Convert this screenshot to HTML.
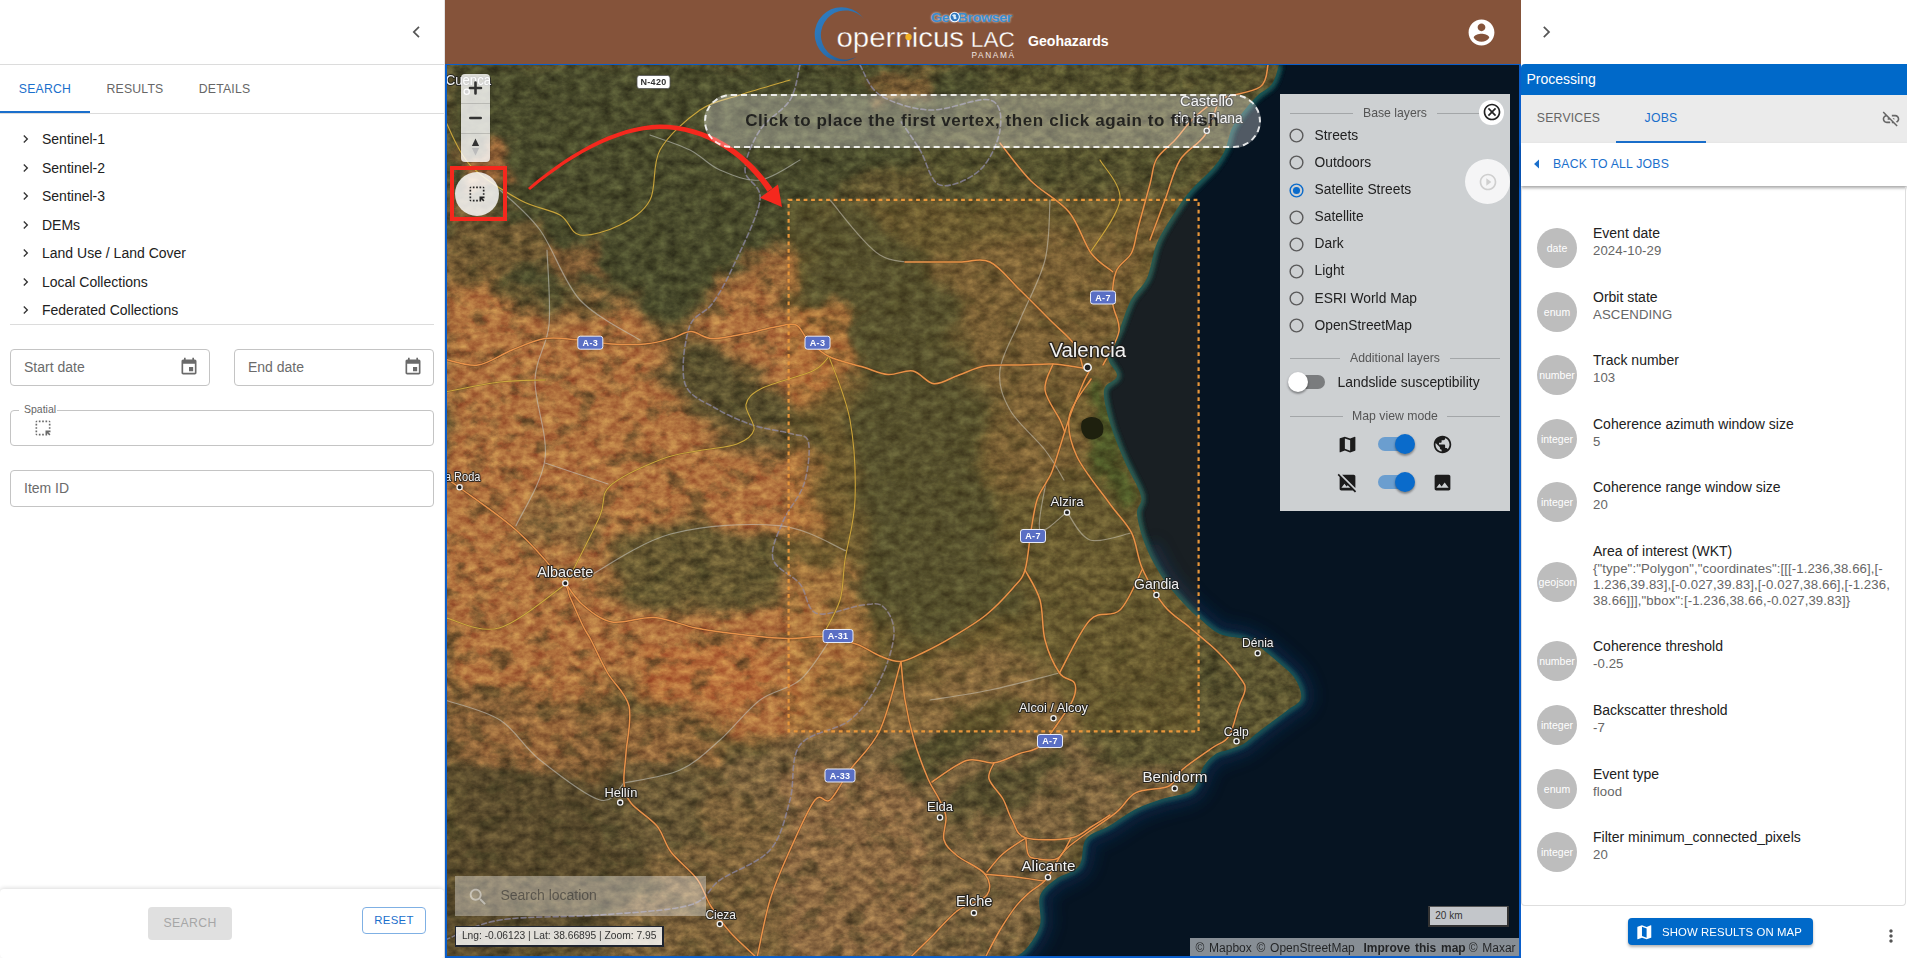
<!DOCTYPE html>
<html lang="en">
<head>
<meta charset="utf-8">
<title>GeoBrowser - Geohazards</title>
<style>
*{box-sizing:border-box;margin:0;padding:0}
html,body{width:1907px;height:958px;overflow:hidden;background:#fff;font-family:"Liberation Sans",sans-serif;color:#212121}
body{position:relative}
.abs{position:absolute}
svg{display:block}
/* ---------- left panel ---------- */
#left{position:absolute;left:0;top:0;width:445px;height:958px;background:#fff;border-right:1px solid #e4e4e4}
#left .hdr{position:absolute;left:0;top:0;width:444px;height:65px;border-bottom:1px solid #dcdcdc}
.tabs{position:absolute;left:0;top:65px;width:444px;height:49px;border-bottom:1px solid #dcdcdc}
.tab{position:absolute;top:0;height:48px;line-height:48px;font-size:12.25px;letter-spacing:.2px;color:#666;text-align:center}
.tab.on{color:#1a6fcc}
.tree{position:absolute;left:0;top:125px;width:444px}
.tree .row{position:absolute;left:0;height:28px;width:444px}
.tree .row span{position:absolute;left:42px;top:0;line-height:28px;font-size:14px;color:#212121}
.tree .row svg{position:absolute;left:18px;top:6px}
.field{position:absolute;border:1px solid #c4c4c4;border-radius:4px;background:#fff}
.field .ph{position:absolute;left:13px;top:0;font-size:14px;color:#6b6b6b}
/* ---------- center ---------- */
#top{position:absolute;left:445px;top:0;width:1076px;height:65px;background:#85533a}
#map{position:absolute;left:445px;top:64px;width:1075.5px;height:894px;border:2px solid #0a5ecb;border-top-width:1px;overflow:hidden;background:#061422}
/* ---------- right panel ---------- */
#right{position:absolute;left:1521px;top:0;width:386px;height:958px;background:#fff}

.av{width:40px;height:40px;border-radius:50%;background:#bdbdbd;color:#fff;font-size:10.5px;line-height:40px;text-align:center}
.it{font-size:14px;line-height:16px;color:#212121;white-space:nowrap}
.iv{font-size:13.2px;letter-spacing:.1px;line-height:16px;color:#666;white-space:nowrap}
</style>
</head>
<body>

<!-- ================= LEFT PANEL ================= -->
<div id="left">
  <div class="hdr">
    <svg class="abs" style="left:405px;top:20px" width="24" height="24" viewBox="0 0 24 24"><path d="M14.6 7.4 13.4 6.2 7.6 12l5.8 5.8 1.2-1.2L10 12z" fill="#555"/></svg>
  </div>
  <div class="tabs">
    <div class="tab on" style="left:0;width:90px">SEARCH</div>
    <div class="tab" style="left:90px;width:90px">RESULTS</div>
    <div class="tab" style="left:180px;width:89px">DETAILS</div>
    <div class="abs" style="left:0;top:46px;width:90px;height:2px;background:#1a6fcc"></div>
  </div>
  <div class="tree">
    <div class="row" style="top:0px"><svg width="16" height="16" viewBox="0 0 24 24"><path d="M9.4 6 8 7.4l4.6 4.6L8 16.6 9.4 18l6-6z" fill="#333"/></svg><span>Sentinel-1</span></div>
    <div class="row" style="top:29px"><svg width="16" height="16" viewBox="0 0 24 24"><path d="M9.4 6 8 7.4l4.6 4.6L8 16.6 9.4 18l6-6z" fill="#333"/></svg><span>Sentinel-2</span></div>
    <div class="row" style="top:57px"><svg width="16" height="16" viewBox="0 0 24 24"><path d="M9.4 6 8 7.4l4.6 4.6L8 16.6 9.4 18l6-6z" fill="#333"/></svg><span>Sentinel-3</span></div>
    <div class="row" style="top:86px"><svg width="16" height="16" viewBox="0 0 24 24"><path d="M9.4 6 8 7.4l4.6 4.6L8 16.6 9.4 18l6-6z" fill="#333"/></svg><span>DEMs</span></div>
    <div class="row" style="top:114px"><svg width="16" height="16" viewBox="0 0 24 24"><path d="M9.4 6 8 7.4l4.6 4.6L8 16.6 9.4 18l6-6z" fill="#333"/></svg><span>Land Use / Land Cover</span></div>
    <div class="row" style="top:143px"><svg width="16" height="16" viewBox="0 0 24 24"><path d="M9.4 6 8 7.4l4.6 4.6L8 16.6 9.4 18l6-6z" fill="#333"/></svg><span>Local Collections</span></div>
    <div class="row" style="top:171px"><svg width="16" height="16" viewBox="0 0 24 24"><path d="M9.4 6 8 7.4l4.6 4.6L8 16.6 9.4 18l6-6z" fill="#333"/></svg><span>Federated Collections</span></div>
  </div>
  <div class="abs" style="left:10px;top:324px;width:424px;height:1px;background:#dcdcdc"></div>
  <div class="field" style="left:10px;top:349px;width:200px;height:37px"><div class="ph" style="line-height:35px">Start date</div><svg class="abs" style="right:10px;top:7px" width="20" height="20" viewBox="0 0 24 24"><path d="M17 12h-5v5h5v-5zM16 1v2H8V1H6v2H5c-1.11 0-1.99.9-1.99 2L3 19c0 1.1.89 2 2 2h14c1.1 0 2-.9 2-2V5c0-1.1-.9-2-2-2h-1V1h-2zm3 18H5V8h14v11z" fill="#6a6a6a"/></svg></div>
  <div class="field" style="left:234px;top:349px;width:200px;height:37px"><div class="ph" style="line-height:35px">End date</div><svg class="abs" style="right:10px;top:7px" width="20" height="20" viewBox="0 0 24 24"><path d="M17 12h-5v5h5v-5zM16 1v2H8V1H6v2H5c-1.11 0-1.99.9-1.99 2L3 19c0 1.1.89 2 2 2h14c1.1 0 2-.9 2-2V5c0-1.1-.9-2-2-2h-1V1h-2zm3 18H5V8h14v11z" fill="#6a6a6a"/></svg></div>
  <div class="field" style="left:10px;top:410px;width:424px;height:36px">
    <div class="abs" style="left:8px;top:-8px;padding:0 1px 0 5px;background:#fff;font-size:10.5px;line-height:12px;color:#666">Spatial</div>
    <svg class="abs" style="left:22px;top:7px" width="20" height="20" viewBox="0 0 24 24" fill="#6a6a6a"><path d="M17 5h-2V3h2v2zm-2 16h2v-2.59L19.59 21 21 19.59 18.41 17H21v-2h-6v6zm4-12h2V7h-2v2zm0 4h2v-2h-2v2zm-8 8h2v-2h-2v2zM7 5h2V3H7v2zM3 17h2v-2H3v2zm2 4v-2H3c0 1.1.9 2 2 2zM19 3v2h2c0-1.1-.9-2-2-2zm-8 2h2V3h-2v2zM3 9h2V7H3v2zm4 12h2v-2H7v2zm-4-8h2v-2H3v2zm0-8h2V3c-1.1 0-2 .9-2 2z"/></svg>
  </div>
  <div class="field" style="left:10px;top:470px;width:424px;height:37px"><div class="ph" style="line-height:35px">Item ID</div></div>
  <div class="abs" style="left:0;top:889px;width:444px;height:69px;background:#fff;border-radius:4px;box-shadow:0 -1px 4px rgba(0,0,0,.14)"></div>
  <div class="abs" style="left:148px;top:907px;width:84px;height:33px;border-radius:4px;background:#e0e0e0;color:#a6a6a6;font-size:12.25px;letter-spacing:.35px;line-height:33px;text-align:center">SEARCH</div>
  <div class="abs" style="left:362px;top:907px;width:64px;height:27px;border-radius:4px;border:1px solid #7fb0e4;color:#1a6fcc;font-size:11.4px;letter-spacing:.3px;line-height:25px;text-align:center">RESET</div>
</div>

<!-- ================= TOP BAR ================= -->
<div id="top">
  <!--LOGO_START-->
  <svg class="abs" style="left:355px;top:0" width="330" height="65" viewBox="800 0 330 65">
    <defs>
      <linearGradient id="cg" x1="0" y1="0" x2="1" y2="1"><stop offset="0" stop-color="#2f7fc4"/><stop offset=".55" stop-color="#2a6fae"/><stop offset="1" stop-color="#1d4f86"/></linearGradient>
      <filter id="glow" x="-20%" y="-50%" width="140%" height="200%"><feGaussianBlur stdDeviation="1.1"/></filter>
    </defs>
    <path d="M864,19 A27,27 0 1 0 857,56.5 A24.5,24.5 0 1 1 864,19Z" fill="url(#cg)"/>
    <text x="836.5" y="47.3" font-family="Liberation Sans, sans-serif" font-size="28.5" fill="#fff" stroke="#85533a" stroke-width=".35" textLength="127.5" lengthAdjust="spacingAndGlyphs">opernicus</text>
    <circle cx="908.5" cy="37" r="3.2" fill="#f5b324"/>
    <text x="970.8" y="47" font-family="Liberation Sans, sans-serif" font-size="22" fill="#fff" stroke="#85533a" stroke-width=".3" textLength="44" lengthAdjust="spacingAndGlyphs">LAC</text>
    <text x="971.5" y="58.2" font-family="Liberation Sans, sans-serif" font-size="8.3" fill="#f1e7e1" textLength="42.5" lengthAdjust="spacing">PANAMÁ</text>
    <g font-family="Liberation Sans, sans-serif" font-size="13" font-weight="bold" letter-spacing="-.4">
      <text x="931" y="21.5" fill="#fff" filter="url(#glow)" opacity=".9" textLength="81" lengthAdjust="spacingAndGlyphs">GeoBrowser</text>
      <text x="931" y="21.5" fill="#3a8cd0" textLength="81" lengthAdjust="spacingAndGlyphs">GeoBrowser</text>
    </g>
    <circle cx="954.7" cy="17" r="5.2" fill="#fff"/><circle cx="954.7" cy="17" r="4.2" fill="#2f77bd"/>
    <path d="M952,15.5 q2,-2 4,-.5 q-1,2 .8,3.200 q-2,2 -3.200,.3 q.5,-1.800 -1.600,-3z" fill="#d9ecf8"/>
    <text x="1028" y="46.100" font-family="Liberation Sans, sans-serif" font-size="14.100" font-weight="bold" fill="#fff">Geohazards</text>
  </svg>
  <svg class="abs" style="left:1020.500px;top:16.500px" width="31" height="31" viewBox="0 0 24 24"><path d="M12 2C6.480 2 2 6.480 2 12s4.480 10 10 10 10-4.480 10-10S17.520 2 12 2zm0 3c1.660 0 3 1.340 3 3s-1.340 3-3 3-3-1.340-3-3 1.340-3 3-3zm0 14.200c-2.500 0-4.710-1.280-6-3.220.030-1.990 4-3.080 6-3.080 1.990 0 5.970 1.090 6 3.080-1.290 1.940-3.500 3.220-6 3.220z" fill="#fff"/></svg>
  <!--LOGO_END-->
</div>

<!-- ================= MAP ================= -->
<div id="map">
  <!--MAPSVG_START-->
<svg class="abs" style="left:-2px;top:-1px" width="1076" height="894" viewBox="445 64 1076 894">
<defs>
<filter id="bl" x="-20%" y="-20%" width="140%" height="140%" color-interpolation-filters="sRGB"><feGaussianBlur stdDeviation="9" result="b"/><feTurbulence type="fractalNoise" baseFrequency="0.012 0.016" numOctaves="4" seed="3" result="t"/><feDisplacementMap in="b" in2="t" scale="70" xChannelSelector="R" yChannelSelector="G"/></filter>
<filter id="bm" x="-30%" y="-30%" width="160%" height="160%" color-interpolation-filters="sRGB"><feGaussianBlur stdDeviation="5" result="b"/><feTurbulence type="fractalNoise" baseFrequency="0.02 0.025" numOctaves="4" seed="9" result="t"/><feDisplacementMap in="b" in2="t" scale="45" xChannelSelector="R" yChannelSelector="G"/></filter>
<filter id="bg" x="-50%" y="-50%" width="200%" height="200%"><feGaussianBlur stdDeviation="7"/></filter>
<filter id="bs" x="-50%" y="-50%" width="200%" height="200%"><feGaussianBlur stdDeviation="2.5"/></filter>
<filter id="tx" x="0" y="0" width="100%" height="100%" color-interpolation-filters="sRGB">
  <feTurbulence type="fractalNoise" baseFrequency="0.045 0.06" numOctaves="5" seed="7"/>
  <feColorMatrix type="matrix" values="0 0 0 0 0.19  0 0 0 0 0.22  0 0 0 0 0.12  3.0 2.2 0 0 -2.55"/>
</filter>
<filter id="fine" x="0" y="0" width="100%" height="100%" color-interpolation-filters="sRGB">
  <feTurbulence type="fractalNoise" baseFrequency="0.09 0.12" numOctaves="4" seed="11" result="n"/>
  <feColorMatrix in="n" type="matrix" values="0.48 0 0 0 0.25  0.48 0 0 0 0.25  0.48 0 0 0 0.25  0 0 0 0 1" result="g"/>
  <feBlend in="g" in2="SourceGraphic" mode="overlay" result="b"/>
  <feComposite in="b" in2="SourceGraphic" operator="in" result="c"/>
  <feColorMatrix in="c" type="matrix" values="1.05 0 0 0 0.012  0 0.965 0 0 0  0 0 0.98 0 0  0 0 0 1 0"/>
</filter>
<clipPath id="landc"><path d="M440,60 L1279,65 C1277.8,68.2 1275.7,78.8 1272,84 C1268.3,89.2 1261.8,91.3 1257,96 C1252.2,100.7 1247.2,106.7 1243,112 C1238.8,117.3 1235.0,121.7 1232,128 C1229.0,134.3 1228.2,143.3 1225,150 C1221.8,156.7 1218.7,161.3 1213,168 C1207.3,174.7 1197.3,182.7 1191,190 C1184.7,197.3 1180.7,203.2 1175,212 C1169.3,220.8 1161.7,232.0 1157,243 C1152.3,254.0 1151.3,268.5 1147,278 C1142.7,287.5 1135.7,291.2 1131,300 C1126.3,308.8 1122.8,321.5 1119,331 C1115.2,340.5 1108.3,349.5 1108,357 C1107.7,364.5 1117.7,370.5 1117,376 C1116.3,381.5 1105.2,382.2 1104,390 C1102.8,397.8 1106.7,411.3 1110,423 C1113.3,434.7 1118.8,447.8 1124,460 C1129.2,472.2 1138.8,487.0 1141,496 C1143.2,505.0 1136.2,505.5 1137,514 C1137.8,522.5 1141.5,536.0 1146,547 C1150.5,558.0 1157.3,570.2 1164,580 C1170.7,589.8 1180.0,599.5 1186,606 C1192.0,612.5 1194.4,614.3 1200,619 C1205.6,623.7 1212.5,630.7 1219.7,634 C1227.0,637.3 1236.9,636.8 1243.5,639 C1250.1,641.2 1253.5,643.0 1259.4,647 C1265.3,651.0 1273.1,657.7 1279,663 C1284.9,668.3 1291.3,672.8 1295,678.7 C1298.7,684.6 1302.3,693.3 1301,698.6 C1299.7,703.9 1292.0,706.5 1287,710.5 C1282.0,714.5 1276.3,718.4 1271,722.4 C1265.7,726.4 1260.0,730.7 1255.4,734.3 C1250.8,737.9 1248.1,741.4 1243.5,744 C1238.9,746.6 1232.2,748.3 1227.6,750 C1223.0,751.7 1219.7,751.3 1215.7,754 C1211.7,756.7 1207.8,760.0 1203.8,766 C1199.8,772.0 1199.0,784.5 1192,790 C1185.0,795.5 1171.3,795.8 1162,799 C1152.7,802.2 1144.8,804.5 1136,809 C1127.2,813.5 1117.3,821.0 1109,826 C1100.7,831.0 1091.0,832.3 1086,839 C1081.0,845.7 1084.0,859.3 1079,866 C1074.0,872.7 1062.5,874.0 1056,879 C1049.5,884.0 1042.7,888.3 1040,896 C1037.3,903.7 1042.3,916.2 1040,925 C1037.7,933.8 1031.0,943.2 1026,949 C1021.0,954.8 1012.7,958.2 1010,960 L440,960 Z"/></clipPath>
</defs>
<rect x="445" y="64" width="1076" height="894" fill="#061422"/>
<path d="M1279,65 C1277.8,68.2 1275.7,78.8 1272,84 C1268.3,89.2 1261.8,91.3 1257,96 C1252.2,100.7 1247.2,106.7 1243,112 C1238.8,117.3 1235.0,121.7 1232,128 C1229.0,134.3 1228.2,143.3 1225,150 C1221.8,156.7 1218.7,161.3 1213,168 C1207.3,174.7 1197.3,182.7 1191,190 C1184.7,197.3 1180.7,203.2 1175,212 C1169.3,220.8 1161.7,232.0 1157,243 C1152.3,254.0 1151.3,268.5 1147,278 C1142.7,287.5 1135.7,291.2 1131,300 C1126.3,308.8 1122.8,321.5 1119,331 C1115.2,340.5 1108.3,349.5 1108,357 C1107.7,364.5 1117.7,370.5 1117,376 C1116.3,381.5 1105.2,382.2 1104,390 C1102.8,397.8 1106.7,411.3 1110,423 C1113.3,434.7 1118.8,447.8 1124,460 C1129.2,472.2 1138.8,487.0 1141,496 C1143.2,505.0 1136.2,505.5 1137,514 C1137.8,522.5 1141.5,536.0 1146,547 C1150.5,558.0 1157.3,570.2 1164,580 C1170.7,589.8 1180.0,599.5 1186,606 C1192.0,612.5 1194.4,614.3 1200,619 C1205.6,623.7 1212.5,630.7 1219.7,634 C1227.0,637.3 1236.9,636.8 1243.5,639 C1250.1,641.2 1253.5,643.0 1259.4,647 C1265.3,651.0 1273.1,657.7 1279,663 C1284.9,668.3 1291.3,672.8 1295,678.7 C1298.7,684.6 1302.3,693.3 1301,698.6 C1299.7,703.9 1292.0,706.5 1287,710.5 C1282.0,714.5 1276.3,718.4 1271,722.4 C1265.7,726.4 1260.0,730.7 1255.4,734.3 C1250.8,737.9 1248.1,741.4 1243.5,744 C1238.9,746.6 1232.2,748.3 1227.6,750 C1223.0,751.7 1219.7,751.3 1215.7,754 C1211.7,756.7 1207.8,760.0 1203.8,766 C1199.8,772.0 1199.0,784.5 1192,790 C1185.0,795.5 1171.3,795.8 1162,799 C1152.7,802.2 1144.8,804.5 1136,809 C1127.2,813.5 1117.3,821.0 1109,826 C1100.7,831.0 1091.0,832.3 1086,839 C1081.0,845.7 1084.0,859.3 1079,866 C1074.0,872.7 1062.5,874.0 1056,879 C1049.5,884.0 1042.7,888.3 1040,896 C1037.3,903.7 1042.3,916.2 1040,925 C1037.7,933.8 1031.0,943.2 1026,949 C1021.0,954.8 1012.7,958.2 1010,960" fill="none" stroke="#1b5b5a" stroke-width="6" stroke-linejoin="round" filter="url(#bs)" opacity=".9"/>
<path d="M1146,547 C1149.0,552.5 1157.3,570.2 1164,580 C1170.7,589.8 1180.0,599.5 1186,606 C1192.0,612.5 1194.4,614.3 1200,619 C1205.6,623.7 1212.5,630.7 1219.7,634 C1227.0,637.3 1236.9,636.8 1243.5,639 C1250.1,641.2 1253.5,643.0 1259.4,647 C1265.3,651.0 1273.1,657.7 1279,663 C1284.9,668.3 1291.3,672.8 1295,678.7 C1298.7,684.6 1302.3,693.3 1301,698.6 C1299.7,703.9 1292.0,706.5 1287,710.5 C1282.0,714.5 1276.3,718.4 1271,722.4 C1265.7,726.4 1260.0,730.7 1255.4,734.3 C1250.8,737.9 1248.1,741.4 1243.5,744 C1238.9,746.6 1232.2,748.3 1227.6,750 C1223.0,751.7 1219.7,751.3 1215.7,754 C1211.7,756.7 1207.8,760.0 1203.8,766 C1199.8,772.0 1199.0,784.5 1192,790 C1185.0,795.5 1171.3,795.8 1162,799 C1152.7,802.2 1144.8,804.5 1136,809 C1127.2,813.5 1117.3,821.0 1109,826 C1100.7,831.0 1091.0,832.3 1086,839 C1081.0,845.7 1084.0,859.3 1079,866 C1074.0,872.7 1062.5,874.0 1056,879 C1049.5,884.0 1042.7,888.3 1040,896 C1037.3,903.7 1042.3,916.2 1040,925 C1037.7,933.8 1031.0,943.2 1026,949 C1021.0,954.8 1012.7,958.2 1010,960" fill="none" stroke="#10294e" stroke-width="26" filter="url(#bg)" opacity=".6"/>
<path d="M1279,65 C1277.8,68.2 1275.7,78.8 1272,84 C1268.3,89.2 1261.8,91.3 1257,96 C1252.2,100.7 1247.2,106.7 1243,112 C1238.8,117.3 1235.0,121.7 1232,128 C1229.0,134.3 1228.2,143.3 1225,150 C1221.8,156.7 1218.7,161.3 1213,168 C1207.3,174.7 1197.3,182.7 1191,190 C1184.7,197.3 1180.7,203.2 1175,212 C1169.3,220.8 1161.7,232.0 1157,243 C1152.3,254.0 1151.3,268.5 1147,278 C1142.7,287.5 1135.7,291.2 1131,300 C1126.3,308.8 1122.8,321.5 1119,331 C1115.2,340.5 1108.3,349.5 1108,357 C1107.7,364.5 1117.7,370.5 1117,376 C1116.3,381.5 1105.2,382.2 1104,390 C1102.8,397.8 1106.7,411.3 1110,423 C1113.3,434.7 1118.8,447.8 1124,460 C1129.2,472.2 1138.8,487.0 1141,496 C1143.2,505.0 1136.2,505.5 1137,514 C1137.8,522.5 1141.5,536.0 1146,547 C1150.5,558.0 1157.3,570.2 1164,580 C1170.7,589.8 1180.0,599.5 1186,606 C1192.0,612.5 1194.4,614.3 1200,619 C1205.6,623.7 1212.5,630.7 1219.7,634 C1227.0,637.3 1236.9,636.8 1243.5,639 C1250.1,641.2 1253.5,643.0 1259.4,647 C1265.3,651.0 1273.1,657.7 1279,663 C1284.9,668.3 1291.3,672.8 1295,678.7 C1298.7,684.6 1302.3,693.3 1301,698.6 C1299.7,703.9 1292.0,706.5 1287,710.5 C1282.0,714.5 1276.3,718.4 1271,722.4 C1265.7,726.4 1260.0,730.7 1255.4,734.3 C1250.8,737.9 1248.1,741.4 1243.5,744 C1238.9,746.6 1232.2,748.3 1227.6,750 C1223.0,751.7 1219.7,751.3 1215.7,754 C1211.7,756.7 1207.8,760.0 1203.8,766 C1199.8,772.0 1199.0,784.5 1192,790 C1185.0,795.5 1171.3,795.8 1162,799 C1152.7,802.2 1144.8,804.5 1136,809 C1127.2,813.5 1117.3,821.0 1109,826 C1100.7,831.0 1091.0,832.3 1086,839 C1081.0,845.7 1084.0,859.3 1079,866 C1074.0,872.7 1062.5,874.0 1056,879 C1049.5,884.0 1042.7,888.3 1040,896 C1037.3,903.7 1042.3,916.2 1040,925 C1037.7,933.8 1031.0,943.2 1026,949 C1021.0,954.8 1012.7,958.2 1010,960" fill="none" stroke="#1b5b5a" stroke-width="6" stroke-linejoin="round" filter="url(#bs)" opacity=".9"/>
<g clip-path="url(#landc)"><g filter="url(#fine)">
<rect x="440" y="60" width="900" height="900" fill="#5e5b32"/>
<g filter="url(#bl)">
<polygon points="440,60 1000,60 960,120 900,160 830,200 790,240 745,270 720,310 680,335 600,325 520,295 440,255" fill="#46512f" opacity="1"/>
<polygon points="1000,60 1285,60 1235,130 1195,190 1100,200 1000,190 930,180 900,160 960,120" fill="#515831" opacity="1"/>
<polygon points="440,285 560,300 680,340 760,285 800,300 855,345 850,390 805,410 805,470 830,520 800,570 820,610 865,650 850,720 780,745 700,720 600,700 440,690" fill="#a87941" opacity="1"/>
<polygon points="660,345 720,345 790,400 825,440 800,470 760,450 700,420 660,380" fill="#4b5230" opacity="0.9"/>
<polygon points="610,540 700,530 790,545 820,580 740,600 640,600 600,580" fill="#565a33" opacity="0.85"/>
<polygon points="800,205 870,205 930,260 960,330 985,400 975,450 1000,520 1010,600 960,650 900,640 860,600 860,520 850,460 860,400 830,330 800,280" fill="#455030" opacity="1"/>
<polygon points="930,255 1000,232 1100,236 1168,238 1150,270 1110,360 1085,400 1075,480 1000,480 985,400 960,330" fill="#6b6138" opacity="1"/>
<polygon points="880,195 1200,195 1170,240 1000,232 930,255 905,225" fill="#5b5b33" opacity="1"/>
<polygon points="1000,480 1135,480 1160,570 1216,625 1320,660 1320,720 1260,760 1200,800 1100,770 1016,650" fill="#585b33" opacity="1"/>
<polygon points="780,745 860,700 960,660 1016,650 1100,760 1195,790 1100,830 1045,900 1015,965 700,965 720,860 700,780" fill="#776a41" opacity="1"/>
<polygon points="440,700 590,720 620,780 640,860 600,965 440,965" fill="#55502f" opacity="1"/>
<polygon points="600,720 700,760 760,800 800,965 600,965 640,860 620,780" fill="#77683d" opacity="1"/>
</g>
<g filter="url(#bm)">
<polygon points="1085,392 1106,392 1127,460 1142,500 1120,500 1095,470" fill="#3b5629" opacity="1"/>
<polygon points="880,760 1010,690 1030,712 900,792" fill="#474d2c" opacity="0.85"/>
<polygon points="940,805 1060,742 1075,765 955,835" fill="#4a4f2d" opacity="0.8"/>
<polygon points="800,700 900,650 915,672 815,727" fill="#4a4f2d" opacity="0.8"/>
<polygon points="1100,700 1200,660 1215,690 1120,730" fill="#4a502d" opacity="0.7"/>
<polygon points="450,150 500,140 520,185 470,200" fill="#96693a" opacity="0.8"/>
<polygon points="545,250 600,240 610,275 560,285" fill="#8e683a" opacity="0.7"/>
<polygon points="720,270 790,245 800,290 740,310" fill="#a37540" opacity="0.8"/>
<polygon points="870,75 930,70 935,105 880,110" fill="#8e6a3b" opacity="0.6"/>
<polygon points="470,730 560,720 575,755 480,765" fill="#9a7040" opacity="0.8"/>
<polygon points="445,690 700,715 720,760 650,790 560,770 445,760" fill="#96703e" opacity="0.7"/>
<polygon points="445,200 540,210 560,270 445,285" fill="#8a6a3a" opacity="0.5"/>
<polygon points="640,650 760,640 770,690 650,700" fill="#b2753c" opacity="0.6"/>
<polygon points="780,770 900,760 930,860 900,965 790,965" fill="#96754a" opacity="0.5"/>
<polygon points="789,310 850,305 860,370 795,380" fill="#a87840" opacity="0.8"/>
<polygon points="790,560 850,560 870,640 860,720 790,730" fill="#9f7a44" opacity="0.8"/>
<polygon points="520,500 600,495 610,550 530,560" fill="#7b6f3f" opacity="0.6"/>
<polygon points="600,770 700,760 710,850 610,860" fill="#5c5a36" opacity="0.7"/>
</g>
<rect x="445" y="64" width="880" height="894" filter="url(#tx)" opacity=".38"/>
</g>
<path d="M1082,421 Q1090,414 1099,419 Q1106,426 1102,435 Q1094,442 1086,438 Q1079,431 1082,421Z" fill="#0b150c"/>
</g>
<g fill="none" stroke-linejoin="round" stroke-linecap="round">
<path d="M800,65 C798.3,70.8 796.7,89.2 790,100 C783.3,110.8 767.5,118.3 760,130 C752.5,141.7 745.0,158.3 745,170 C745.0,181.7 762.0,183.9 760,200 C758.0,216.1 741.0,249.4 733,266.7 C725.0,284.0 719.3,293.9 712,304 C704.7,314.1 693.9,313.7 689.4,327 C684.9,340.3 680.5,370.1 685,383.7 C689.5,397.3 705.0,401.8 716.5,408.7 C728.0,415.6 741.5,421.2 754,425.4 C766.5,429.6 782.6,431.0 791.7,433.8 C800.8,436.6 806.4,433.6 808.4,442 C810.4,450.4 808.2,470.8 804,484 C799.8,497.2 788.2,509.0 783,521.5 C777.8,534.0 770.2,548.6 773,559 C775.8,569.4 792.7,574.9 800,584 C807.3,593.1 806.3,609.9 816.8,613.4 C827.2,616.9 851.6,606.1 862.7,605 C873.8,603.9 878.4,602.2 883.6,607 C888.8,611.8 894.6,621.8 894,634 C893.4,646.2 887.3,665.7 880,680 C872.7,694.3 863.3,709.2 850,720 C836.7,730.8 810.0,731.7 800,745 C790.0,758.3 795.0,782.5 790,800 C785.0,817.5 781.7,836.7 770,850 C758.3,863.3 733.3,870.8 720,880 C706.7,889.2 710.0,899.2 690,905 C670.0,910.8 631.7,912.5 600,915 C568.3,917.5 525.8,915.8 500,920 C474.2,924.2 454.2,936.7 445,940" stroke="#8f8aa6" stroke-width="1.6" stroke-dasharray="5 3" opacity=".75"/>
<path d="M860,65 C863.3,70.0 868.3,87.5 880,95 C891.7,102.5 911.7,109.2 930,110 C948.3,110.8 978.3,96.7 990,100 C1001.7,103.3 1001.7,118.3 1000,130 C998.3,141.7 990.0,160.8 980,170 C970.0,179.2 950.0,188.3 940,185 C930.0,181.7 926.7,160.8 920,150 C913.3,139.2 903.3,125.0 900,120" stroke="#8f8aa6" stroke-width="1.6" stroke-dasharray="5 3" opacity=".75"/>
<path d="M547,250 C547.3,262.5 551.0,303.4 549,325 C547.0,346.6 535.7,357.2 535,379.5 C534.3,401.8 548.2,434.6 545,459 C541.8,483.4 520.8,514.6 516,525.7" stroke="#c9cbc4" stroke-width="1.2" opacity=".55"/>
<path d="M545,463 C555.5,466.5 597.5,480.5 608,484" stroke="#c9cbc4" stroke-width="1.2" opacity=".55"/>
<path d="M583,580 C597.6,572.3 637.9,543.0 670.6,534 C703.3,525.0 749.8,522.9 779,525.7 C808.2,528.5 834.8,546.6 846,550.8" stroke="#c9cbc4" stroke-width="1.2" opacity=".55"/>
<path d="M500,190 C506.7,196.7 526.7,211.7 540,230 C553.3,248.3 563.3,281.7 580,300 C596.7,318.3 630.0,333.3 640,340" stroke="#c9cbc4" stroke-width="1.2" opacity=".55"/>
<path d="M650,135 C656.7,137.5 678.3,144.2 690,150 C701.7,155.8 708.3,165.0 720,170 C731.7,175.0 746.7,181.7 760,180 C773.3,178.3 793.3,163.3 800,160" stroke="#c9cbc4" stroke-width="1.2" opacity=".55"/>
<path d="M445,700 C454.2,703.3 484.2,710.0 500,720 C515.8,730.0 523.3,746.7 540,760 C556.7,773.3 586.0,796.2 600,800 C614.0,803.8 620.0,785.8 624,783" stroke="#c9cbc4" stroke-width="1.2" opacity=".55"/>
<path d="M624,783 C633.3,780.8 664.0,777.2 680,770 C696.0,762.8 706.7,751.7 720,740 C733.3,728.3 746.7,710.0 760,700 C773.3,690.0 788.3,690.0 800,680 C811.7,670.0 825.0,646.7 830,640" stroke="#c9cbc4" stroke-width="1.2" opacity=".55"/>
<path d="M830,200 C838.3,209.2 863.3,244.7 880,255 C896.7,265.3 921.7,260.8 930,262" stroke="#c9cbc4" stroke-width="1.2" opacity=".55"/>
<path d="M1050,200 C1049.2,210.0 1050.0,240.0 1045,260 C1040.0,280.0 1027.5,301.7 1020,320 C1012.5,338.3 1001.7,355.0 1000,370 C998.3,385.0 1002.5,396.7 1010,410 C1017.5,423.3 1036.0,438.3 1045,450 C1054.0,461.7 1060.8,475.0 1064,480" stroke="#c9cbc4" stroke-width="1.2" opacity=".55"/>
<path d="M1067,512 C1070.8,516.7 1079.3,536.5 1090,540 C1100.7,543.5 1124.2,534.2 1131,533" stroke="#c9cbc4" stroke-width="1.2" opacity=".55"/>
<path d="M1046,482 C1045.0,490.0 1036.5,525.0 1040,530 C1043.5,535.0 1062.5,515.0 1067,512" stroke="#c9cbc4" stroke-width="1.2" opacity=".55"/>
<path d="M930,700 C940.0,698.3 968.4,694.5 990,690 C1011.6,685.5 1047.9,675.8 1059.5,673" stroke="#c9cbc4" stroke-width="1.2" opacity=".55"/>
<path d="M566,584 C571.6,572.8 592.2,533.3 599.5,517 C606.8,500.7 599.6,495.7 610,486 C620.4,476.3 647.0,464.9 662,459 C677.0,453.1 687.5,453.0 700,450.5 C712.5,448.0 728.0,447.5 737,444 C746.0,440.5 752.5,436.2 754,429.6 C755.5,423.0 744.6,411.5 746,404.6 C747.4,397.7 751.4,393.6 762.5,388 C773.6,382.4 801.5,376.2 812.6,371 C823.7,365.8 826.3,358.9 829,356.5" stroke="#5a4a1a" stroke-width="1.8" opacity=".4"/>
<path d="M566,584 C571.6,572.8 592.2,533.3 599.5,517 C606.8,500.7 599.6,495.7 610,486 C620.4,476.3 647.0,464.9 662,459 C677.0,453.1 687.5,453.0 700,450.5 C712.5,448.0 728.0,447.5 737,444 C746.0,440.5 752.5,436.2 754,429.6 C755.5,423.0 744.6,411.5 746,404.6 C747.4,397.7 751.4,393.6 762.5,388 C773.6,382.4 801.5,376.2 812.6,371 C823.7,365.8 826.3,358.9 829,356.5" stroke="#d4ae40" stroke-width="1.1" opacity=".9"/>
<path d="M445,392 C454.2,390.3 483.3,384.0 500,382 C516.7,380.0 537.5,380.3 545,380" stroke="#5a4a1a" stroke-width="1.8" opacity=".4"/>
<path d="M445,392 C454.2,390.3 483.3,384.0 500,382 C516.7,380.0 537.5,380.3 545,380" stroke="#d4ae40" stroke-width="1.1" opacity=".9"/>
<path d="M445,617.6 C454.0,619.3 478.8,633.6 499,628 C519.2,622.4 554.8,591.3 566,584" stroke="#5a4a1a" stroke-width="1.8" opacity=".4"/>
<path d="M445,617.6 C454.0,619.3 478.8,633.6 499,628 C519.2,622.4 554.8,591.3 566,584" stroke="#d4ae40" stroke-width="1.1" opacity=".9"/>
<path d="M445,120 C449.2,127.5 457.5,151.7 470,165 C482.5,178.3 505.0,191.7 520,200 C535.0,208.3 550.0,209.2 560,215 C570.0,220.8 570.0,233.3 580,235 C590.0,236.7 608.3,230.8 620,225 C631.7,219.2 643.3,212.5 650,200 C656.7,187.5 651.7,165.0 660,150 C668.3,135.0 686.7,119.2 700,110 C713.3,100.8 725.0,100.0 740,95 C755.0,90.0 781.7,82.5 790,80" stroke="#5a4a1a" stroke-width="1.8" opacity=".4"/>
<path d="M445,120 C449.2,127.5 457.5,151.7 470,165 C482.5,178.3 505.0,191.7 520,200 C535.0,208.3 550.0,209.2 560,215 C570.0,220.8 570.0,233.3 580,235 C590.0,236.7 608.3,230.8 620,225 C631.7,219.2 643.3,212.5 650,200 C656.7,187.5 651.7,165.0 660,150 C668.3,135.0 686.7,119.2 700,110 C713.3,100.8 725.0,100.0 740,95 C755.0,90.0 781.7,82.5 790,80" stroke="#d4ae40" stroke-width="1.1" opacity=".9"/>
<path d="M829,356.5 C832.5,367.1 845.7,396.1 850,420 C854.3,443.9 855.8,476.7 855,500 C854.2,523.3 847.5,543.3 845,560 C842.5,576.7 843.8,587.2 840,600 C836.2,612.8 825.0,630.5 822,636.6" stroke="#5a4a1a" stroke-width="1.8" opacity=".4"/>
<path d="M829,356.5 C832.5,367.1 845.7,396.1 850,420 C854.3,443.9 855.8,476.7 855,500 C854.2,523.3 847.5,543.3 845,560 C842.5,576.7 843.8,587.2 840,600 C836.2,612.8 825.0,630.5 822,636.6" stroke="#d4ae40" stroke-width="1.1" opacity=".9"/>
<path d="M1100,160 C1103.3,166.7 1121.7,184.5 1120,200 C1118.3,215.5 1095.0,244.2 1090,253" stroke="#5a4a1a" stroke-width="1.8" opacity=".4"/>
<path d="M1100,160 C1103.3,166.7 1121.7,184.5 1120,200 C1118.3,215.5 1095.0,244.2 1090,253" stroke="#d4ae40" stroke-width="1.1" opacity=".9"/>
<path d="M445,359.4 C450.5,360.3 466.8,366.6 478,365 C489.2,363.4 500.8,354.4 512,350 C523.2,345.6 533.8,340.3 545,338.6 C556.2,336.9 567.8,339.1 579,340 C590.2,340.9 601.0,343.3 612,344 C623.0,344.7 635.2,344.9 645,344 C654.8,343.1 663.3,340.7 671,338.6 C678.7,336.5 684.2,331.5 691,331.5 C697.8,331.5 702.8,338.3 712,338.6 C721.2,338.9 735.5,335.4 746,333.5 C756.5,331.6 766.7,328.4 775,327 C783.3,325.6 790.5,322.8 796,325 C801.5,327.2 802.5,334.8 808,340 C813.5,345.2 819.8,352.0 829,356.5 C838.2,361.0 853.2,364.0 863,367 C872.8,370.0 879.7,373.8 888,374.5 C896.3,375.2 905.3,369.5 913,371 C920.7,372.5 926.3,383.0 934,383.7 C941.7,384.4 950.5,377.9 959,375 C967.5,372.1 974.5,367.7 985,366 C995.5,364.3 1010.7,365.3 1022,365 C1033.3,364.7 1042.8,363.5 1053,364 C1063.2,364.5 1078.0,367.3 1083,368" stroke="#4e321b" stroke-width="2.4" opacity=".55"/>
<path d="M566,584 C568.8,587.5 575.3,598.7 583,605 C590.7,611.3 600.2,619.9 612,622 C623.8,624.1 640.0,616.6 654,617.6 C668.0,618.6 682.2,625.3 696,628 C709.8,630.7 721.8,632.2 737,634 C752.2,635.8 772.8,638.1 787,638.5 C801.2,638.9 810.5,635.7 822,636.6 C833.5,637.5 846.3,640.8 856,644 C865.7,647.2 872.5,653.1 880,656 C887.5,658.9 893.5,662.1 901,661.4 C908.5,660.7 916.3,655.8 925,651.7 C933.7,647.6 942.8,642.7 953,636.6 C963.2,630.5 976.0,623.1 986,615 C996.0,606.9 1006.5,595.5 1013,588 C1019.5,580.5 1022.0,579.6 1025,570 C1028.0,560.4 1029.0,542.3 1031,530.6 C1033.0,518.9 1034.4,508.1 1037,500 C1039.6,491.9 1043.9,487.0 1046.5,482 C1049.1,477.0 1049.6,478.3 1052.6,470 C1055.6,461.7 1061.7,441.3 1064.7,432 C1067.7,422.7 1067.7,422.0 1070.7,414 C1073.7,406.0 1079.8,391.1 1082.8,384 C1085.8,376.9 1088.0,373.8 1089,371.7" stroke="#4e321b" stroke-width="2.4" opacity=".55"/>
<path d="M445,478 C447.5,479.7 448.2,479.3 460,488 C471.8,496.7 499.0,514.7 516,530 C533.0,545.3 553.0,568.8 562,580 C571.0,591.2 566.5,589.3 570,597 C573.5,604.7 579.5,618.8 583,626 C586.5,633.2 586.9,632.2 591,640 C595.1,647.8 601.3,662.0 607.6,673 C613.9,684.0 625.9,692.7 629,706 C632.1,719.3 626.8,740.2 626,753 C625.2,765.8 623.2,774.7 624,783 C624.8,791.3 625.5,795.8 631,803 C636.5,810.2 650.3,817.8 657,826 C663.7,834.2 664.3,843.2 671,852 C677.7,860.8 690.4,870.1 697,879 C703.6,887.9 705.0,896.7 710.5,905.5 C716.0,914.3 722.2,923.2 730,932 C737.8,940.8 752.5,953.7 757,958" stroke="#4e321b" stroke-width="2.4" opacity=".55"/>
<path d="M1268,65 C1266.7,68.7 1268.2,81.2 1260,87 C1251.8,92.8 1230.0,94.3 1219,99.5 C1208.0,104.7 1201.3,111.2 1194,118 C1186.7,124.8 1181.2,133.2 1175,140 C1168.8,146.8 1160.8,151.7 1156.6,159 C1152.4,166.3 1153.1,172.5 1150,184 C1146.9,195.5 1141.1,216.5 1138,228 C1134.9,239.5 1135.2,245.7 1131.5,253 C1127.8,260.3 1119.1,263.4 1116,271.7 C1112.9,280.0 1112.2,293.1 1112.7,303 C1113.2,312.9 1120.6,320.7 1119,331 C1117.4,341.3 1105.7,359.3 1103,365" stroke="#4e321b" stroke-width="2.4" opacity=".55"/>
<path d="M1000,143 C1005.2,149.3 1019.5,169.5 1031,181 C1042.5,192.5 1059.0,200.0 1069,212 C1079.0,224.0 1083.7,243.1 1091,253 C1098.3,262.9 1109.1,268.6 1112.7,271.7" stroke="#4e321b" stroke-width="2.4" opacity=".55"/>
<path d="M1219,99.5 C1216.7,105.4 1211.5,124.9 1205,135 C1198.5,145.1 1186.7,149.2 1180,160 C1173.3,170.8 1170.0,186.7 1165,200 C1160.0,213.3 1152.5,233.3 1150,240" stroke="#4e321b" stroke-width="2.4" opacity=".55"/>
<path d="M1091,379 C1087.4,385.2 1071.8,403.2 1069.4,416 C1067.0,428.8 1070.0,441.4 1076.7,456 C1083.4,470.6 1100.5,490.7 1109.6,503.5 C1118.7,516.3 1126.0,521.8 1131.5,532.7 C1137.0,543.6 1137.0,556.8 1142.5,569 C1148.0,581.2 1156.5,596.2 1164.4,606 C1172.3,615.8 1180.9,619.9 1190,627.7 C1199.1,635.5 1210.5,644.5 1219,653 C1227.5,661.5 1236.7,672.8 1241,679 C1245.3,685.2 1245.4,685.4 1245,690 C1244.6,694.6 1241.5,698.7 1238.8,706.4 C1236.1,714.1 1233.3,729.4 1228.8,736.3 C1224.3,743.2 1219.7,742.5 1212,748 C1204.3,753.5 1189.6,763.2 1182.4,769.5 C1175.2,775.8 1176.7,782.1 1169,786 C1161.3,789.9 1144.8,788.3 1136,792.7 C1127.2,797.1 1124.9,805.4 1116,812.6 C1107.1,819.8 1091.6,829.4 1082.8,836 C1074.0,842.6 1069.1,845.2 1063,852.4 C1056.9,859.6 1051.8,872.4 1046.3,879 C1040.8,885.6 1034.7,887.9 1029.7,892.3 C1024.7,896.7 1021.4,899.3 1016.4,905.6 C1011.4,911.9 1005.2,921.3 1000,930 C994.8,938.7 987.5,953.3 985,958" stroke="#4e321b" stroke-width="2.4" opacity=".55"/>
<path d="M1025,570 C1027.5,575.0 1036.7,588.3 1040,600 C1043.3,611.7 1041.8,627.8 1045,640 C1048.2,652.2 1054.6,665.8 1059.5,673 C1064.4,680.2 1072.3,678.5 1074.5,683 C1076.7,687.5 1075.9,692.8 1072.8,700 C1069.7,707.2 1058.8,721.7 1056,726" stroke="#4e321b" stroke-width="2.4" opacity=".55"/>
<path d="M901,661.4 C901.7,667.8 902.8,686.9 905,700 C907.2,713.1 910.2,726.9 914,740 C917.8,753.1 923.8,768.9 928,778.7 C932.2,788.5 936.0,792.6 939,799 C942.0,805.4 945.2,810.2 946,817 C946.8,823.8 942.1,833.5 944,840 C945.9,846.5 950.7,850.3 957.5,856 C964.3,861.7 980.1,867.5 985,874 C989.9,880.5 991.6,888.9 987,895 C982.4,901.1 966.6,903.9 957.5,910.7 C948.4,917.5 940.4,927.9 932.4,935.8 C924.4,943.7 913.5,954.3 909.7,958" stroke="#4e321b" stroke-width="2.4" opacity=".55"/>
<path d="M932,782 C937.8,778.4 956.3,763.7 966.6,760.5 C976.9,757.3 985.3,763.9 994,762.8 C1002.7,761.7 1011.5,756.4 1019,753.7 C1026.5,751.0 1032.8,751.4 1039,746.8 C1045.2,742.2 1053.2,729.5 1056,726" stroke="#4e321b" stroke-width="2.4" opacity=".55"/>
<path d="M994,762.8 C993.2,765.4 987.5,772.7 989,778.7 C990.5,784.7 999.2,792.2 1003,799 C1006.8,805.8 1008.2,813.2 1012,819.7 C1015.8,826.2 1016.0,834.9 1025.8,837.9 C1035.6,840.9 1060.0,839.8 1071,837.9 C1082.0,836.0 1085.3,830.3 1091.8,826.5 C1098.3,822.7 1107.0,816.9 1110,815" stroke="#4e321b" stroke-width="2.4" opacity=".55"/>
<path d="M1025.8,838 C1026.2,840.6 1026.5,850.4 1028,853.8 C1029.5,857.2 1030.0,857.6 1034.9,858.4 C1039.8,859.2 1051.6,861.8 1057.6,858.4 C1063.6,855.0 1068.8,841.4 1071,838" stroke="#4e321b" stroke-width="2.4" opacity=".55"/>
<path d="M985,874.3 C989.5,874.7 1002.2,875.5 1012,876.6 C1021.8,877.7 1038.7,880.3 1044,881" stroke="#4e321b" stroke-width="2.4" opacity=".55"/>
<path d="M987,872 C989.7,869.0 996.5,859.5 1003,853.8 C1009.5,848.1 1022.0,840.6 1025.8,838" stroke="#4e321b" stroke-width="2.4" opacity=".55"/>
<path d="M1053,364 C1051.7,368.3 1043.8,380.7 1045,390 C1046.2,399.3 1056.7,413.0 1060,420 C1063.3,427.0 1063.9,430.0 1064.7,432" stroke="#4e321b" stroke-width="2.4" opacity=".55"/>
<path d="M1083,368 C1081.7,364.2 1080.5,353.0 1075,345 C1069.5,337.0 1059.2,329.2 1050,320 C1040.8,310.8 1030.0,299.7 1020,290 C1010.0,280.3 1000.0,266.7 990,262 C980.0,257.3 970.0,262.0 960,262 C950.0,262.0 939.2,262.0 930,262 C920.8,262.0 909.2,262.0 905,262" stroke="#4e321b" stroke-width="2.4" opacity=".55"/>
<path d="M757,958 C759.2,948.3 764.5,918.0 770,900 C775.5,882.0 782.5,866.7 790,850 C797.5,833.3 808.3,808.3 815,800 C821.7,791.7 824.2,805.0 830,800 C835.8,795.0 841.7,781.7 850,770 C858.3,758.3 871.5,748.1 880,730 C888.5,711.9 897.5,672.8 901,661.4" stroke="#4e321b" stroke-width="2.4" opacity=".55"/>
<path d="M1142.5,569 C1138.8,575.8 1128.8,601.5 1120,610 C1111.2,618.5 1100.1,609.5 1090,620 C1079.9,630.5 1064.6,664.2 1059.5,673" stroke="#4e321b" stroke-width="2.4" opacity=".55"/>
<path d="M445,359.4 C450.5,360.3 466.8,366.6 478,365 C489.2,363.4 500.8,354.4 512,350 C523.2,345.6 533.8,340.3 545,338.6 C556.2,336.9 567.8,339.1 579,340 C590.2,340.9 601.0,343.3 612,344 C623.0,344.7 635.2,344.9 645,344 C654.8,343.1 663.3,340.7 671,338.6 C678.7,336.5 684.2,331.5 691,331.5 C697.8,331.5 702.8,338.3 712,338.6 C721.2,338.9 735.5,335.4 746,333.5 C756.5,331.6 766.7,328.4 775,327 C783.3,325.6 790.5,322.8 796,325 C801.5,327.2 802.5,334.8 808,340 C813.5,345.2 819.8,352.0 829,356.5 C838.2,361.0 853.2,364.0 863,367 C872.8,370.0 879.7,373.8 888,374.5 C896.3,375.2 905.3,369.5 913,371 C920.7,372.5 926.3,383.0 934,383.7 C941.7,384.4 950.5,377.9 959,375 C967.5,372.1 974.5,367.7 985,366 C995.5,364.3 1010.7,365.3 1022,365 C1033.3,364.7 1042.8,363.5 1053,364 C1063.2,364.5 1078.0,367.3 1083,368" stroke="#e8924a" stroke-width="1.5"/>
<path d="M566,584 C568.8,587.5 575.3,598.7 583,605 C590.7,611.3 600.2,619.9 612,622 C623.8,624.1 640.0,616.6 654,617.6 C668.0,618.6 682.2,625.3 696,628 C709.8,630.7 721.8,632.2 737,634 C752.2,635.8 772.8,638.1 787,638.5 C801.2,638.9 810.5,635.7 822,636.6 C833.5,637.5 846.3,640.8 856,644 C865.7,647.2 872.5,653.1 880,656 C887.5,658.9 893.5,662.1 901,661.4 C908.5,660.7 916.3,655.8 925,651.7 C933.7,647.6 942.8,642.7 953,636.6 C963.2,630.5 976.0,623.1 986,615 C996.0,606.9 1006.5,595.5 1013,588 C1019.5,580.5 1022.0,579.6 1025,570 C1028.0,560.4 1029.0,542.3 1031,530.6 C1033.0,518.9 1034.4,508.1 1037,500 C1039.6,491.9 1043.9,487.0 1046.5,482 C1049.1,477.0 1049.6,478.3 1052.6,470 C1055.6,461.7 1061.7,441.3 1064.7,432 C1067.7,422.7 1067.7,422.0 1070.7,414 C1073.7,406.0 1079.8,391.1 1082.8,384 C1085.8,376.9 1088.0,373.8 1089,371.7" stroke="#e8924a" stroke-width="1.5"/>
<path d="M445,478 C447.5,479.7 448.2,479.3 460,488 C471.8,496.7 499.0,514.7 516,530 C533.0,545.3 553.0,568.8 562,580 C571.0,591.2 566.5,589.3 570,597 C573.5,604.7 579.5,618.8 583,626 C586.5,633.2 586.9,632.2 591,640 C595.1,647.8 601.3,662.0 607.6,673 C613.9,684.0 625.9,692.7 629,706 C632.1,719.3 626.8,740.2 626,753 C625.2,765.8 623.2,774.7 624,783 C624.8,791.3 625.5,795.8 631,803 C636.5,810.2 650.3,817.8 657,826 C663.7,834.2 664.3,843.2 671,852 C677.7,860.8 690.4,870.1 697,879 C703.6,887.9 705.0,896.7 710.5,905.5 C716.0,914.3 722.2,923.2 730,932 C737.8,940.8 752.5,953.7 757,958" stroke="#e8924a" stroke-width="1.5"/>
<path d="M1268,65 C1266.7,68.7 1268.2,81.2 1260,87 C1251.8,92.8 1230.0,94.3 1219,99.5 C1208.0,104.7 1201.3,111.2 1194,118 C1186.7,124.8 1181.2,133.2 1175,140 C1168.8,146.8 1160.8,151.7 1156.6,159 C1152.4,166.3 1153.1,172.5 1150,184 C1146.9,195.5 1141.1,216.5 1138,228 C1134.9,239.5 1135.2,245.7 1131.5,253 C1127.8,260.3 1119.1,263.4 1116,271.7 C1112.9,280.0 1112.2,293.1 1112.7,303 C1113.2,312.9 1120.6,320.7 1119,331 C1117.4,341.3 1105.7,359.3 1103,365" stroke="#e8924a" stroke-width="1.5"/>
<path d="M1000,143 C1005.2,149.3 1019.5,169.5 1031,181 C1042.5,192.5 1059.0,200.0 1069,212 C1079.0,224.0 1083.7,243.1 1091,253 C1098.3,262.9 1109.1,268.6 1112.7,271.7" stroke="#e8924a" stroke-width="1.5"/>
<path d="M1219,99.5 C1216.7,105.4 1211.5,124.9 1205,135 C1198.5,145.1 1186.7,149.2 1180,160 C1173.3,170.8 1170.0,186.7 1165,200 C1160.0,213.3 1152.5,233.3 1150,240" stroke="#e8924a" stroke-width="1.5"/>
<path d="M1091,379 C1087.4,385.2 1071.8,403.2 1069.4,416 C1067.0,428.8 1070.0,441.4 1076.7,456 C1083.4,470.6 1100.5,490.7 1109.6,503.5 C1118.7,516.3 1126.0,521.8 1131.5,532.7 C1137.0,543.6 1137.0,556.8 1142.5,569 C1148.0,581.2 1156.5,596.2 1164.4,606 C1172.3,615.8 1180.9,619.9 1190,627.7 C1199.1,635.5 1210.5,644.5 1219,653 C1227.5,661.5 1236.7,672.8 1241,679 C1245.3,685.2 1245.4,685.4 1245,690 C1244.6,694.6 1241.5,698.7 1238.8,706.4 C1236.1,714.1 1233.3,729.4 1228.8,736.3 C1224.3,743.2 1219.7,742.5 1212,748 C1204.3,753.5 1189.6,763.2 1182.4,769.5 C1175.2,775.8 1176.7,782.1 1169,786 C1161.3,789.9 1144.8,788.3 1136,792.7 C1127.2,797.1 1124.9,805.4 1116,812.6 C1107.1,819.8 1091.6,829.4 1082.8,836 C1074.0,842.6 1069.1,845.2 1063,852.4 C1056.9,859.6 1051.8,872.4 1046.3,879 C1040.8,885.6 1034.7,887.9 1029.7,892.3 C1024.7,896.7 1021.4,899.3 1016.4,905.6 C1011.4,911.9 1005.2,921.3 1000,930 C994.8,938.7 987.5,953.3 985,958" stroke="#e8924a" stroke-width="1.5"/>
<path d="M1025,570 C1027.5,575.0 1036.7,588.3 1040,600 C1043.3,611.7 1041.8,627.8 1045,640 C1048.2,652.2 1054.6,665.8 1059.5,673 C1064.4,680.2 1072.3,678.5 1074.5,683 C1076.7,687.5 1075.9,692.8 1072.8,700 C1069.7,707.2 1058.8,721.7 1056,726" stroke="#e8924a" stroke-width="1.5"/>
<path d="M901,661.4 C901.7,667.8 902.8,686.9 905,700 C907.2,713.1 910.2,726.9 914,740 C917.8,753.1 923.8,768.9 928,778.7 C932.2,788.5 936.0,792.6 939,799 C942.0,805.4 945.2,810.2 946,817 C946.8,823.8 942.1,833.5 944,840 C945.9,846.5 950.7,850.3 957.5,856 C964.3,861.7 980.1,867.5 985,874 C989.9,880.5 991.6,888.9 987,895 C982.4,901.1 966.6,903.9 957.5,910.7 C948.4,917.5 940.4,927.9 932.4,935.8 C924.4,943.7 913.5,954.3 909.7,958" stroke="#e8924a" stroke-width="1.5"/>
<path d="M932,782 C937.8,778.4 956.3,763.7 966.6,760.5 C976.9,757.3 985.3,763.9 994,762.8 C1002.7,761.7 1011.5,756.4 1019,753.7 C1026.5,751.0 1032.8,751.4 1039,746.8 C1045.2,742.2 1053.2,729.5 1056,726" stroke="#e8924a" stroke-width="1.5"/>
<path d="M994,762.8 C993.2,765.4 987.5,772.7 989,778.7 C990.5,784.7 999.2,792.2 1003,799 C1006.8,805.8 1008.2,813.2 1012,819.7 C1015.8,826.2 1016.0,834.9 1025.8,837.9 C1035.6,840.9 1060.0,839.8 1071,837.9 C1082.0,836.0 1085.3,830.3 1091.8,826.5 C1098.3,822.7 1107.0,816.9 1110,815" stroke="#e8924a" stroke-width="1.5"/>
<path d="M1025.8,838 C1026.2,840.6 1026.5,850.4 1028,853.8 C1029.5,857.2 1030.0,857.6 1034.9,858.4 C1039.8,859.2 1051.6,861.8 1057.6,858.4 C1063.6,855.0 1068.8,841.4 1071,838" stroke="#e8924a" stroke-width="1.5"/>
<path d="M985,874.3 C989.5,874.7 1002.2,875.5 1012,876.6 C1021.8,877.7 1038.7,880.3 1044,881" stroke="#e8924a" stroke-width="1.5"/>
<path d="M987,872 C989.7,869.0 996.5,859.5 1003,853.8 C1009.5,848.1 1022.0,840.6 1025.8,838" stroke="#e8924a" stroke-width="1.5"/>
<path d="M1053,364 C1051.7,368.3 1043.8,380.7 1045,390 C1046.2,399.3 1056.7,413.0 1060,420 C1063.3,427.0 1063.9,430.0 1064.7,432" stroke="#e8924a" stroke-width="1.5"/>
<path d="M1083,368 C1081.7,364.2 1080.5,353.0 1075,345 C1069.5,337.0 1059.2,329.2 1050,320 C1040.8,310.8 1030.0,299.7 1020,290 C1010.0,280.3 1000.0,266.7 990,262 C980.0,257.3 970.0,262.0 960,262 C950.0,262.0 939.2,262.0 930,262 C920.8,262.0 909.2,262.0 905,262" stroke="#e8924a" stroke-width="1.5"/>
<path d="M757,958 C759.2,948.3 764.5,918.0 770,900 C775.5,882.0 782.5,866.7 790,850 C797.5,833.3 808.3,808.3 815,800 C821.7,791.7 824.2,805.0 830,800 C835.8,795.0 841.7,781.7 850,770 C858.3,758.3 871.5,748.1 880,730 C888.5,711.9 897.5,672.8 901,661.4" stroke="#e8924a" stroke-width="1.5"/>
<path d="M1142.5,569 C1138.8,575.8 1128.8,601.5 1120,610 C1111.2,618.5 1100.1,609.5 1090,620 C1079.9,630.5 1064.6,664.2 1059.5,673" stroke="#e8924a" stroke-width="1.5"/>
</g>
<rect x="788.6" y="199.8" width="410" height="531.5" fill="rgba(235,150,50,.085)" stroke="#e8963a" stroke-width="2.2" stroke-dasharray="3.8 3.7"/>
<g font-family="Liberation Sans, sans-serif" text-anchor="middle" font-weight="bold">
<rect x="577.8" y="336.2" width="25" height="13" rx="2.5" fill="#5a6fc4" stroke="#e8ebf7" stroke-width="1"/>
<text x="590.3" y="346.0" font-size="9" fill="#fff" letter-spacing=".3">A-3</text>
<rect x="805.0" y="336.2" width="25" height="13" rx="2.5" fill="#5a6fc4" stroke="#e8ebf7" stroke-width="1"/>
<text x="817.5" y="346.0" font-size="9" fill="#fff" letter-spacing=".3">A-3</text>
<rect x="1090.5" y="291.0" width="25" height="13" rx="2.5" fill="#5a6fc4" stroke="#e8ebf7" stroke-width="1"/>
<text x="1103" y="300.8" font-size="9" fill="#fff" letter-spacing=".3">A-7</text>
<rect x="1020.5" y="529.5" width="25" height="13" rx="2.5" fill="#5a6fc4" stroke="#e8ebf7" stroke-width="1"/>
<text x="1033" y="539.3" font-size="9" fill="#fff" letter-spacing=".3">A-7</text>
<rect x="1037.5" y="734.5" width="25" height="13" rx="2.5" fill="#5a6fc4" stroke="#e8ebf7" stroke-width="1"/>
<text x="1050" y="744.3" font-size="9" fill="#fff" letter-spacing=".3">A-7</text>
<rect x="823.0" y="629.5" width="30" height="13" rx="2.5" fill="#5a6fc4" stroke="#e8ebf7" stroke-width="1"/>
<text x="838" y="639.3" font-size="9" fill="#fff" letter-spacing=".3">A-31</text>
<rect x="825.0" y="769.0" width="30" height="13" rx="2.5" fill="#5a6fc4" stroke="#e8ebf7" stroke-width="1"/>
<text x="840" y="778.8" font-size="9" fill="#fff" letter-spacing=".3">A-33</text>
<rect x="637" y="75.5" width="33" height="13" rx="2.5" fill="#fff" stroke="#555" stroke-width=".8"/><text x="653.5" y="85.4" font-size="9" fill="#333" letter-spacing=".3">N-420</text>
</g>
<g font-family="Liberation Sans, sans-serif" text-anchor="middle" fill="#f2f2f2" stroke="#1c1c1c" stroke-opacity=".85" stroke-linejoin="round" paint-order="stroke" style="paint-order:stroke">
<text x="1087.7" y="356.6" font-size="20" stroke-width="2.6" textLength="76.6" lengthAdjust="spacingAndGlyphs">Valencia</text>
<text x="565.2" y="576.6" font-size="14.6" stroke-width="2.2" textLength="56" lengthAdjust="spacingAndGlyphs">Albacete</text>
<text x="1156.6" y="589" font-size="15" stroke-width="2.2" textLength="45" lengthAdjust="spacingAndGlyphs">Gandia</text>
<text x="1067" y="506" font-size="13" stroke-width="2.2" textLength="33" lengthAdjust="spacingAndGlyphs">Alzira</text>
<text x="1053.5" y="712" font-size="13" stroke-width="2.2" textLength="69" lengthAdjust="spacingAndGlyphs">Alcoi / Alcoy</text>
<text x="1257.8" y="646.6" font-size="12.6" stroke-width="2.2" textLength="31.5" lengthAdjust="spacingAndGlyphs">Dénia</text>
<text x="1236.3" y="735.6" font-size="13" stroke-width="2.2" textLength="25" lengthAdjust="spacingAndGlyphs">Calp</text>
<text x="1174.9" y="782" font-size="15" stroke-width="2.2" textLength="65" lengthAdjust="spacingAndGlyphs">Benidorm</text>
<text x="1048.4" y="870.7" font-size="15" stroke-width="2.2" textLength="54" lengthAdjust="spacingAndGlyphs">Alicante</text>
<text x="974.2" y="905.6" font-size="14" stroke-width="2.2" textLength="36.5" lengthAdjust="spacingAndGlyphs">Elche</text>
<text x="940" y="811" font-size="12.6" stroke-width="2.2" textLength="26" lengthAdjust="spacingAndGlyphs">Elda</text>
<text x="620.9" y="797" font-size="13" stroke-width="2.2" textLength="33" lengthAdjust="spacingAndGlyphs">Hellín</text>
<text x="720.7" y="918.8" font-size="13" stroke-width="2.2" textLength="30.5" lengthAdjust="spacingAndGlyphs">Cieza</text>
<text x="468.4" y="84.6" font-size="15.5" stroke-width="2.2" textLength="45.5" lengthAdjust="spacingAndGlyphs">Cuenca</text>
<text x="1206.6" y="106.3" font-size="14" stroke-width="2.2" textLength="53" lengthAdjust="spacingAndGlyphs">Castelló</text>
<text x="1208.2" y="123" font-size="14" stroke-width="2.2" textLength="69" lengthAdjust="spacingAndGlyphs">de la Plana</text>
<text x="462.7" y="481" font-size="12.5" stroke-width="2.2" textLength="35.5" lengthAdjust="spacingAndGlyphs">a Roda</text>
</g>
<circle cx="1087.6" cy="367.5" r="3.6" fill="#222" stroke="#f2f2f2" stroke-width="1.6"/>
<circle cx="565.3" cy="583.3" r="2.6" fill="#222" stroke="#f2f2f2" stroke-width="1.3"/>
<circle cx="1156.4" cy="595" r="2.6" fill="#222" stroke="#f2f2f2" stroke-width="1.3"/>
<circle cx="1067" cy="512.4" r="2.6" fill="#222" stroke="#f2f2f2" stroke-width="1.3"/>
<circle cx="1053.5" cy="718.3" r="2.6" fill="#222" stroke="#f2f2f2" stroke-width="1.3"/>
<circle cx="1257.7" cy="653.3" r="2.6" fill="#222" stroke="#f2f2f2" stroke-width="1.3"/>
<circle cx="1236.5" cy="741.2" r="2.6" fill="#222" stroke="#f2f2f2" stroke-width="1.3"/>
<circle cx="1174.7" cy="788.4" r="2.6" fill="#222" stroke="#f2f2f2" stroke-width="1.3"/>
<circle cx="1048" cy="877.3" r="2.6" fill="#222" stroke="#f2f2f2" stroke-width="1.3"/>
<circle cx="973.9" cy="912.9" r="2.6" fill="#222" stroke="#f2f2f2" stroke-width="1.3"/>
<circle cx="940" cy="817.5" r="2.6" fill="#222" stroke="#f2f2f2" stroke-width="1.3"/>
<circle cx="620.2" cy="802.6" r="2.6" fill="#222" stroke="#f2f2f2" stroke-width="1.3"/>
<circle cx="719.8" cy="924" r="2.6" fill="#222" stroke="#f2f2f2" stroke-width="1.3"/>
<circle cx="466.7" cy="91.7" r="2.6" fill="#222" stroke="#f2f2f2" stroke-width="1.3"/>
<circle cx="1206.7" cy="130.8" r="2.6" fill="#222" stroke="#f2f2f2" stroke-width="1.3"/>
<circle cx="459.6" cy="487.3" r="2.6" fill="#222" stroke="#f2f2f2" stroke-width="1.3"/>
</svg>
<!--MAPSVG_END-->
  <!--MAPUI_START-->
  <div class="abs" style="left:14px;top:9px;width:29px;height:88px;border-radius:4px;background:rgba(255,255,255,.8);box-shadow:0 0 0 1px rgba(0,0,0,.08)"></div>
  <div class="abs" style="left:14px;top:38px;width:29px;height:1px;background:rgba(0,0,0,.15)"></div>
  <div class="abs" style="left:14px;top:67.5px;width:29px;height:1px;background:rgba(0,0,0,.15)"></div>
  <svg class="abs" style="left:14px;top:9px" width="29" height="88" viewBox="0 0 29 88"><path d="M14.500 8.500v11M9 14h11" stroke="#333" stroke-width="2.600" stroke-linecap="round" fill="none"/><path d="M9.300 44h10.400" stroke="#333" stroke-width="2.600" stroke-linecap="round"/><path d="M14.500 64.500l3.600 7.500h-7.200z" fill="#333"/><path d="M14.500 81.500l3.600-7.500h-7.200z" fill="#bbb"/></svg>
  <div class="abs" style="left:7.5px;top:106.8px;width:44px;height:44px;border-radius:50%;background:rgba(255,255,255,.82)"></div>
  <svg class="abs" style="left:19.5px;top:119px" width="20" height="20" viewBox="0 0 24 24"><path d="M17 5h-2V3h2v2zm-2 16h2v-2.590L19.590 21 21 19.590 18.410 17H21v-2h-6v6zm4-12h2V7h-2v2zm0 4h2v-2h-2v2zm-8 8h2v-2h-2v2zM7 5h2V3H7v2zM3 17h2v-2H3v2zm2 4v-2H3c0 1.100.900 2 2 2zM19 3v2h2c0-1.100-.900-2-2-2zm-8 2h2V3h-2v2zM3 9h2V7H3v2zm4 12h2v-2H7v2zm-4-8h2v-2H3v2zm0-8h2V3c-1.100 0-2 .900-2 2z" fill="#222"/></svg>
  <div class="abs" style="left:3px;top:100.5px;width:57px;height:55.500px;border:4.500px solid #f5281d"></div>
  <svg class="abs" style="left:53px;top:35px" width="320" height="130" viewBox="500 100 320 130"><path d="M530.0,190.1 L538.6,183.0 L547.4,176.3 L556.2,169.9 L565.0,163.8 L573.9,158.2 L582.7,153.0 L591.6,148.2 L600.4,143.9 L609.2,140.2 L617.9,136.9 L626.5,134.1 L635.1,131.9 L643.5,130.3 L651.8,129.4 L659.9,129.0 L667.8,129.2 L676.3,130.3 L684.5,131.8 L692.3,133.9 L699.9,136.3 L707.1,139.2 L714.0,142.5 L720.6,146.2 L726.9,150.2 L733.0,154.5 L738.7,159.1 L744.2,164.0 L749.4,169.2 L754.3,174.5 L759.0,180.1 L763.4,185.8 L767.5,191.7 L772.5,188.3 L768.1,182.3 L763.5,176.4 L758.6,170.7 L753.4,165.3 L747.9,160.0 L742.2,155.0 L736.2,150.2 L729.8,145.8 L723.2,141.7 L716.3,138.0 L709.0,134.7 L701.5,131.7 L693.6,129.3 L685.5,127.3 L677.0,125.7 L668.2,124.8 L659.8,124.6 L651.4,125.1 L642.8,126.2 L634.1,127.9 L625.4,130.3 L616.6,133.2 L607.7,136.6 L598.8,140.6 L589.9,145.0 L581.0,149.9 L572.0,155.3 L563.1,161.0 L554.3,167.2 L545.5,173.7 L536.7,180.6 L528.0,187.9Z" fill="#f5281d"/><path d="M760,197.800 L778,184.500 L782,207Z" fill="#f5281d"/></svg>
  <div class="abs" style="left:257px;top:29px;width:556.500px;height:53.500px;border-radius:27px;border:2px dashed rgba(255,255,255,.85);background:rgba(255,255,255,.3);text-align:center;line-height:50px;font-size:17px;font-weight:bold;letter-spacing:.59px;color:rgba(20,20,20,.86);white-space:nowrap">Click to place the first vertex, then click again to finish</div>
  <div class="abs" style="left:8px;top:811.3px;width:251px;height:39.500px;background:rgba(255,255,255,.36)"></div>
  <svg class="abs" style="left:20px;top:821px" width="22" height="22" viewBox="0 0 24 24"><path d="M15.500 14h-.790l-.280-.270C15.410 12.590 16 11.110 16 9.500 16 5.910 13.090 3 9.500 3S3 5.910 3 9.500 5.910 16 9.500 16c1.610 0 3.090-.590 4.230-1.570l.270.280v.790l5 4.990L20.490 19l-4.990-5zm-6 0C7.010 14 5 11.990 5 9.500S7.010 5 9.500 5 14 7.010 14 9.500 11.990 14 9.500 14z" fill="rgba(255,255,255,.45)"/></svg>
  <div class="abs" style="left:53.4px;top:811.3px;height:39.500px;line-height:39.500px;font-size:14px;color:rgba(40,40,40,.55);white-space:nowrap">Search location</div>
  <div class="abs" style="left:8.4px;top:861.2px;width:208.800px;height:20.500px;border:2px solid #1f2430;border-top-width:1.500px;border-left-width:1.500px;background:rgba(255,255,255,.82);font-size:10.250px;line-height:17.500px;padding-left:5.500px;color:#333;white-space:nowrap">Lng: -0.06123 | Lat: 38.66895 | Zoom: 7.95</div>
  <div class="abs" style="left:981.3px;top:841px;width:81px;height:20.500px;border:2px solid #333;border-top:1px solid #555;background:rgba(255,255,255,.76);font-size:10px;line-height:18px;padding-left:5px;color:#333">20 km</div>
  <div class="abs" style="left:743px;top:872.7px;width:331px;height:21px;background:rgba(255,255,255,.52);font-size:12px;line-height:20px;padding-left:5.500px;color:rgba(0,0,0,.75);white-space:nowrap;word-spacing:1.4px">© Mapbox © OpenStreetMap <b style="margin:0 3px 0 4px">Improve this map</b>© Maxar</div>
  <div class="abs" style="left:833px;top:29px;width:230px;height:416.500px;background:rgba(255,255,255,.8)"></div>
  <div class="abs" style="left:848px;top:40px;width:200px;text-align:center;font-size:12.250px;line-height:16px;color:#555">Base layers</div><div class="abs" style="left:843px;top:48px;width:63px;height:1px;background:rgba(0,0,0,.2)"></div><div class="abs" style="left:990px;top:48px;width:63px;height:1px;background:rgba(0,0,0,.2)"></div>
  <div class="abs" style="left:1032.2px;top:35px;width:24.500px;height:24.500px;border-radius:50%;background:#fff"></div>
  <svg class="abs" style="left:1034.5px;top:37.3px" width="20" height="20" viewBox="0 0 24 24"><path d="M12 2C6.470 2 2 6.470 2 12s4.470 10 10 10 10-4.470 10-10S17.530 2 12 2zm0 18c-4.410 0-8-3.590-8-8s3.590-8 8-8 8 3.590 8 8-3.590 8-8 8zm3.590-13L12 10.590 8.410 7 7 8.410 10.590 12 7 15.590 8.410 17 12 13.410 15.590 17 17 15.590 13.410 12 17 8.410z" fill="#222"/></svg>
  <svg class="abs" style="left:840.8px;top:62.3px" width="17" height="17" viewBox="0 0 24 24"><circle cx="12" cy="12" r="9" fill="none" stroke="#5a5a5a" stroke-width="2"/></svg>
  <div class="abs" style="left:867.5px;top:62.8px;font-size:13.800px;line-height:16px;color:#222;white-space:nowrap">Streets</div>
  <svg class="abs" style="left:840.8px;top:89.42px" width="17" height="17" viewBox="0 0 24 24"><circle cx="12" cy="12" r="9" fill="none" stroke="#5a5a5a" stroke-width="2"/></svg>
  <div class="abs" style="left:867.5px;top:89.92px;font-size:13.800px;line-height:16px;color:#222;white-space:nowrap">Outdoors</div>
  <svg class="abs" style="left:840.8px;top:116.54px" width="17" height="17" viewBox="0 0 24 24"><circle cx="12" cy="12" r="9" fill="none" stroke="#0a6bcb" stroke-width="2"/><circle cx="12" cy="12" r="5" fill="#0a6bcb"/></svg>
  <div class="abs" style="left:867.5px;top:117.04px;font-size:13.800px;line-height:16px;color:#222;white-space:nowrap">Satellite Streets</div>
  <svg class="abs" style="left:840.8px;top:143.66px" width="17" height="17" viewBox="0 0 24 24"><circle cx="12" cy="12" r="9" fill="none" stroke="#5a5a5a" stroke-width="2"/></svg>
  <div class="abs" style="left:867.5px;top:144.16px;font-size:13.800px;line-height:16px;color:#222;white-space:nowrap">Satellite</div>
  <svg class="abs" style="left:840.8px;top:170.78px" width="17" height="17" viewBox="0 0 24 24"><circle cx="12" cy="12" r="9" fill="none" stroke="#5a5a5a" stroke-width="2"/></svg>
  <div class="abs" style="left:867.5px;top:171.28px;font-size:13.800px;line-height:16px;color:#222;white-space:nowrap">Dark</div>
  <svg class="abs" style="left:840.8px;top:197.9px" width="17" height="17" viewBox="0 0 24 24"><circle cx="12" cy="12" r="9" fill="none" stroke="#5a5a5a" stroke-width="2"/></svg>
  <div class="abs" style="left:867.5px;top:198.4px;font-size:13.800px;line-height:16px;color:#222;white-space:nowrap">Light</div>
  <svg class="abs" style="left:840.8px;top:225.02px" width="17" height="17" viewBox="0 0 24 24"><circle cx="12" cy="12" r="9" fill="none" stroke="#5a5a5a" stroke-width="2"/></svg>
  <div class="abs" style="left:867.5px;top:225.52px;font-size:13.800px;line-height:16px;color:#222;white-space:nowrap">ESRI World Map</div>
  <svg class="abs" style="left:840.8px;top:252.14px" width="17" height="17" viewBox="0 0 24 24"><circle cx="12" cy="12" r="9" fill="none" stroke="#5a5a5a" stroke-width="2"/></svg>
  <div class="abs" style="left:867.5px;top:252.64px;font-size:13.800px;line-height:16px;color:#222;white-space:nowrap">OpenStreetMap</div>
  <div class="abs" style="left:1018px;top:94px;width:45px;height:45px;border-radius:50%;background:rgba(255,255,255,.8)"></div>
  <svg class="abs" style="left:1030.5px;top:106.5px" width="20" height="20" viewBox="0 0 24 24"><path d="m10 16.500 6-4.500-6-4.500v9zM12 2C6.480 2 2 6.480 2 12s4.480 10 10 10 10-4.480 10-10S17.520 2 12 2zm0 18c-4.410 0-8-3.590-8-8s3.590-8 8-8 8 3.590 8 8-3.590 8-8 8z" fill="#cfcfcf"/></svg>
  <div class="abs" style="left:848px;top:285px;width:200px;text-align:center;font-size:12.250px;line-height:16px;color:#555">Additional layers</div><div class="abs" style="left:843px;top:293px;width:50px;height:1px;background:rgba(0,0,0,.2)"></div><div class="abs" style="left:1003px;top:293px;width:50px;height:1px;background:rgba(0,0,0,.2)"></div>
  <div class="abs" style="left:844px;top:310px;width:34px;height:14px;border-radius:7px;background:rgba(0,0,0,.4)"></div><div class="abs" style="left:841px;top:307px;width:20px;height:20px;border-radius:50%;background:#fff;box-shadow:0 2px 2px rgba(0,0,0,.25),0 1px 3px rgba(0,0,0,.2)"></div>
  <div class="abs" style="left:890.5px;top:309.3px;font-size:13.900px;line-height:16px;color:#222;white-space:nowrap">Landslide susceptibility</div>
  <div class="abs" style="left:848px;top:343px;width:200px;text-align:center;font-size:12.250px;line-height:16px;color:#555">Map view mode</div><div class="abs" style="left:843px;top:351px;width:53px;height:1px;background:rgba(0,0,0,.2)"></div><div class="abs" style="left:1000px;top:351px;width:53px;height:1px;background:rgba(0,0,0,.2)"></div>
  <div class="abs" style="left:931px;top:372.3px;width:34px;height:14px;border-radius:7px;background:rgba(10,107,203,.5)"></div><div class="abs" style="left:948px;top:369.3px;width:20px;height:20px;border-radius:50%;background:#0a6bcb;box-shadow:0 2px 2px rgba(0,0,0,.25),0 1px 3px rgba(0,0,0,.2)"></div>
  <div class="abs" style="left:931px;top:410.3px;width:34px;height:14px;border-radius:7px;background:rgba(10,107,203,.5)"></div><div class="abs" style="left:948px;top:407.3px;width:20px;height:20px;border-radius:50%;background:#0a6bcb;box-shadow:0 2px 2px rgba(0,0,0,.25),0 1px 3px rgba(0,0,0,.2)"></div>
  <svg class="abs" style="left:889.7px;top:369.0px" width="21" height="21" viewBox="0 0 24 24"><path d="m20.500 3-.160.030L15 5.100 9 3 3.360 4.900c-.210.070-.360.250-.360.480V20.500c0 .280.220.500.500.500l.160-.030L9 18.900l6 2.100 5.640-1.900c.210-.070.360-.250.360-.480V3.500c0-.280-.220-.500-.500-.500zM15 19l-6-2.110V5l6 2.110V19z" fill="#1c1c1c"/></svg>
  <svg class="abs" style="left:984.9px;top:369.0px" width="21" height="21" viewBox="0 0 24 24"><path d="M12 2C6.480 2 2 6.480 2 12s4.480 10 10 10 10-4.480 10-10S17.520 2 12 2zm-1 17.930c-3.950-.490-7-3.850-7-7.930 0-.620.080-1.210.210-1.790L9 15v1c0 1.100.900 2 2 2v1.930zm6.900-2.540c-.260-.810-1-1.390-1.900-1.390h-1v-3c0-.550-.450-1-1-1H8v-2h2c.550 0 1-.450 1-1V7h2c1.100 0 2-.900 2-2v-.410c2.930 1.190 5 4.060 5 7.410 0 2.080-.800 3.970-2.100 5.390z" fill="#1c1c1c"/></svg>
  <svg class="abs" style="left:889.7px;top:406.8px" width="21" height="21" viewBox="0 0 24 24"><path d="m21.900 21.900-8.490-8.490-9.820-9.820L2.100 2.100.690 3.510 3 5.830V19c0 1.100.900 2 2 2h13.170l2.310 2.310 1.420-1.410zM5 18l3.500-4.500 2.500 3.010L12.170 15l3 3H5zm16 .170L5.830 3H19c1.100 0 2 .900 2 2v13.170z" fill="#1c1c1c"/></svg>
  <svg class="abs" style="left:984.7px;top:406.8px" width="21" height="21" viewBox="0 0 24 24"><path d="M21 19V5c0-1.100-.900-2-2-2H5c-1.100 0-2 .900-2 2v14c0 1.100.900 2 2 2h14c1.100 0 2-.900 2-2zM8.500 13.500l2.500 3.010L14.500 12l4.500 6H5l3.500-4.500z" fill="#1c1c1c"/></svg>
  <!--MAPUI_END-->
</div>

<!-- ================= RIGHT PANEL ================= -->
<div id="right">
  <svg class="abs" style="left:14px;top:20px" width="24" height="24" viewBox="0 0 24 24"><path d="M9.4 6.2 8.2 7.4 12.8 12l-4.6 4.6 1.2 1.2L15.2 12z" fill="#555"/></svg>
  <div class="abs" style="left:0;top:64px;width:386px;height:31px;background:#0069c9;border-radius:4px 0 0 0;color:#fff;font-size:14px;line-height:30px;padding-left:5.5px">Processing</div>
  <div class="abs" style="left:0;top:95px;width:386px;height:48px;background:#ebebeb"></div>
  <div class="abs tab" style="left:0;top:95px;width:95px;height:46px;line-height:46px">SERVICES</div>
  <div class="abs tab on" style="left:95px;top:95px;width:90px;height:46px;line-height:46px">JOBS</div>
  <div class="abs" style="left:95px;top:141px;width:90px;height:2px;background:#1a6fcc"></div>
  <svg class="abs" style="left:360px;top:109px" width="20" height="20" viewBox="0 0 24 24"><path d="M17 7h-4v1.9h4c1.71 0 3.1 1.39 3.1 3.1 0 1.43-.98 2.63-2.31 2.98l1.46 1.46C20.88 15.61 22 13.95 22 12c0-2.76-2.24-5-5-5zm-1 4h-2.19l2 2H16zM2 4.27l3.11 3.11C3.29 8.12 2 9.91 2 12c0 2.76 2.24 5 5 5h4v-1.9H7c-1.71 0-3.1-1.39-3.1-3.1 0-1.59 1.21-2.9 2.76-3.07L8.73 11H8v2h2.73L13 15.27V17h1.73l4.01 4L20 19.74 3.27 3 2 4.27z" fill="#666"/></svg>
  <div class="abs" style="left:0;top:143px;width:386px;height:43px;background:#fff;box-shadow:0 2px 3px rgba(0,0,0,.35)"></div>
  <svg class="abs" style="left:5px;top:153px" width="22" height="22" viewBox="0 0 24 24"><path d="M14.2 7 8.8 12l5.4 5z" fill="#1a6fcc"/></svg>
  <div class="abs" style="left:32px;top:143px;height:42px;line-height:42px;font-size:12.25px;letter-spacing:.2px;color:#1a6fcc;white-space:nowrap">BACK TO ALL JOBS</div>
  <div class="abs" style="left:0;top:187px;width:385px;height:719px;border:1px solid #dedede;border-top:none;border-radius:0 0 4px 4px"></div>
  <div class="abs av" style="left:16px;top:228px">date</div>
  <div class="abs it" style="left:72px;top:225px">Event date</div>
  <div class="abs iv" style="left:72px;top:243px">2024-10-29</div>
  <div class="abs av" style="left:16px;top:292px">enum</div>
  <div class="abs it" style="left:72px;top:289px">Orbit state</div>
  <div class="abs iv" style="left:72px;top:307px">ASCENDING</div>
  <div class="abs av" style="left:16px;top:355px">number</div>
  <div class="abs it" style="left:72px;top:352px">Track number</div>
  <div class="abs iv" style="left:72px;top:370px">103</div>
  <div class="abs av" style="left:16px;top:419px">integer</div>
  <div class="abs it" style="left:72px;top:416px">Coherence azimuth window size</div>
  <div class="abs iv" style="left:72px;top:434px">5</div>
  <div class="abs av" style="left:16px;top:482px">integer</div>
  <div class="abs it" style="left:72px;top:479px">Coherence range window size</div>
  <div class="abs iv" style="left:72px;top:497px">20</div>
  <div class="abs av" style="left:16px;top:562px">geojson</div>
  <div class="abs it" style="left:72px;top:543px">Area of interest (WKT)</div>
  <div class="abs iv" style="left:72px;top:561px">{&quot;type&quot;:&quot;Polygon&quot;,&quot;coordinates&quot;:[[[-1.236,38.66],[-</div>
  <div class="abs iv" style="left:72px;top:577px">1.236,39.83],[-0.027,39.83],[-0.027,38.66],[-1.236,</div>
  <div class="abs iv" style="left:72px;top:593px">38.66]]],&quot;bbox&quot;:[-1.236,38.66,-0.027,39.83]}</div>
  <div class="abs av" style="left:16px;top:641px">number</div>
  <div class="abs it" style="left:72px;top:638px">Coherence threshold</div>
  <div class="abs iv" style="left:72px;top:656px">-0.25</div>
  <div class="abs av" style="left:16px;top:705px">integer</div>
  <div class="abs it" style="left:72px;top:702px">Backscatter threshold</div>
  <div class="abs iv" style="left:72px;top:720px">-7</div>
  <div class="abs av" style="left:16px;top:769px">enum</div>
  <div class="abs it" style="left:72px;top:766px">Event type</div>
  <div class="abs iv" style="left:72px;top:784px">flood</div>
  <div class="abs av" style="left:16px;top:832px">integer</div>
  <div class="abs it" style="left:72px;top:829px">Filter minimum_connected_pixels</div>
  <div class="abs iv" style="left:72px;top:847px">20</div>
  <div class="abs" style="left:107px;top:918px;width:185px;height:27px;border-radius:4px;background:#0069c9;box-shadow:0 2px 3px rgba(0,0,0,.3);color:#fff;font-size:11.375px;letter-spacing:.1px;line-height:27px;white-space:nowrap"><svg class="abs" style="left:7.3px;top:4.6px" width="18.6" height="18.6" viewBox="0 0 24 24"><path d="m20.5 3-.16.03L15 5.1 9 3 3.36 4.9c-.21.07-.36.25-.36.48V20.500c0 .28.22.5.5.5l.16-.03L9 18.900l6 2.100 5.640-1.900c.210-.070.360-.250.360-.480V3.500c0-.280-.220-.500-.500-.500zM15 19l-6-2.110V5l6 2.110V19z" fill="#fff"/></svg><span class="abs" style="left:34px;top:.5px">SHOW RESULTS ON MAP</span></div>
  <svg class="abs" style="left:360px;top:926px" width="20" height="20" viewBox="0 0 24 24"><path d="M12 8c1.1 0 2-.9 2-2s-.9-2-2-2-2 .9-2 2 .9 2 2 2zm0 2c-1.1 0-2 .9-2 2s.9 2 2 2 2-.9 2-2-.9-2-2-2zm0 6c-1.1 0-2 .9-2 2s.9 2 2 2 2-.9 2-2-.9-2-2-2z" fill="#555"/></svg>
</div>

</body>
</html>
